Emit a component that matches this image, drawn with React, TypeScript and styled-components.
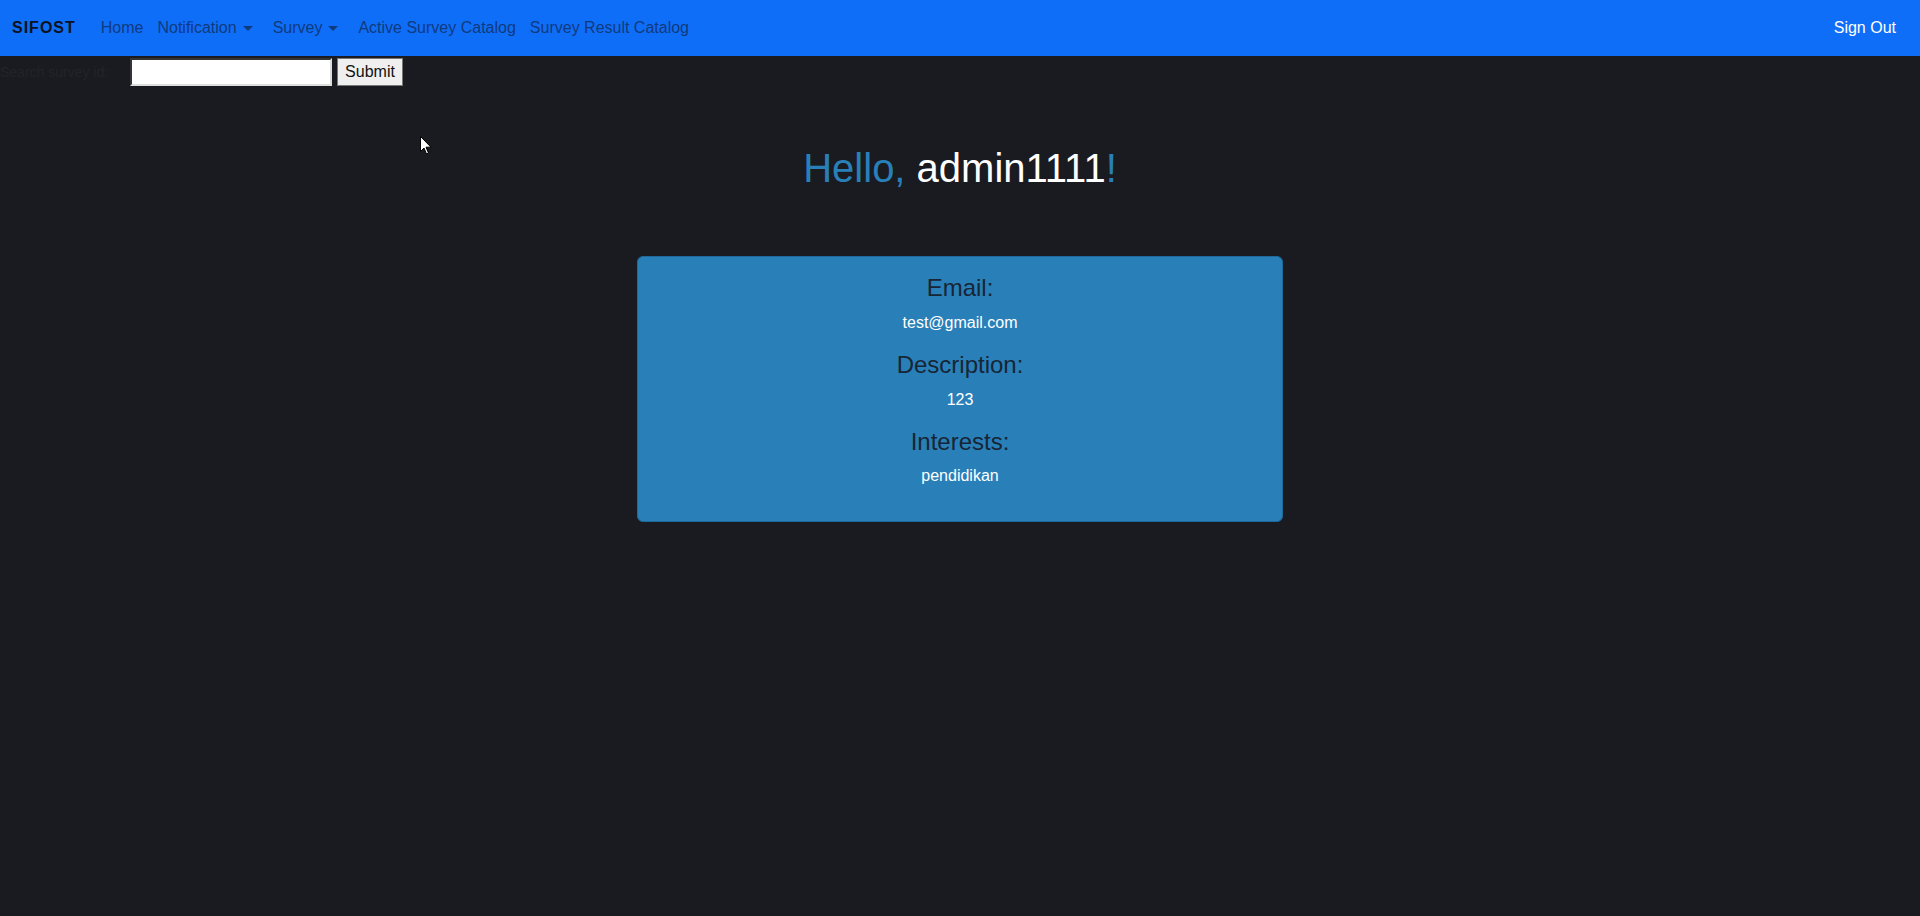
import React from "react";
import styled, { createGlobalStyle } from "styled-components";

const Global = createGlobalStyle`
  html, body {
    margin: 0;
    padding: 0;
    background: #1a1b21;
    font-family: "Liberation Sans", Arial, sans-serif;
    font-size: 16px;
    color: #fff;
  }
  * { box-sizing: border-box; }
`;

const Page = styled.div`
  position: relative;
  min-height: 916px;
  background: #1a1b21;
`;

const Navbar = styled.nav`
  height: 56px;
  background: #0f6ef8;
  display: flex;
  align-items: center;
  padding: 0 17px 0 12px;
`;

const Brand = styled.a`
  font-weight: 700;
  font-size: 16px;
  letter-spacing: 1px;
  color: #0b1222;
  margin-right: 18px;
  text-decoration: none;
`;

const NavList = styled.div`
  display: flex;
  align-items: center;
  flex: 1;
`;

const NavLink = styled.a<{ $light?: boolean }>`
  display: flex;
  align-items: center;
  padding: 0 7px;
  font-size: 16px;
  color: ${(p) => (p.$light ? "#ffffff" : "#0f3a7e")};
  text-decoration: none;
  white-space: nowrap;
`;

const Caret = styled.span`
  display: inline-block;
  margin-left: 6px;
  margin-right: 6px;
  border-top: 5px solid #0f3a7e;
  border-left: 5px solid transparent;
  border-right: 5px solid transparent;
`;

const FormRow = styled.form`
  display: flex;
  align-items: center;
  height: 30px;
  margin-top: 1px;
`;

const Label = styled.label`
  width: 130px;
  font-size: 14px;
  color: #22232a;
  white-space: nowrap;
  overflow: hidden;
`;

const Input = styled.input`
  width: 202px;
  height: 28px;
  border: 2px inset #767676;
  border-color: #888 #ddd #ddd #888;
  background: #fff;
  margin: 0 5px 0 0;
  padding: 0 4px;
`;

const Button = styled.button`
  height: 28px;
  width: 66px;
  padding: 0;
  background: #efefef;
  border: 1px solid #767676;
  font-family: "Liberation Sans", Arial, sans-serif;
  font-size: 16px;
  color: #111;
`;

const Greeting = styled.h1`
  margin: 57px 0 0;
  text-align: center;
  font-weight: 400;
  font-size: 40px;
  line-height: 1.2;
  color: #2980b9;
`;

const Name = styled.span`
  color: #ffffff;
`;

const Card = styled.div`
  width: 646px;
  margin: 64px auto 0;
  background: #2980b9;
  border: 1px solid #1f6a9c;
  border-radius: 6px;
  padding: 17px 16px 17px;
  text-align: center;
`;

const FieldTitle = styled.h4`
  margin: 0 0 8px;
  font-size: 24px;
  font-weight: 400;
  line-height: 1.2;
  color: #172535;
`;

const FieldValue = styled.p`
  margin: 0 0 16px;
  font-size: 16px;
  line-height: 24px;
  color: #ffffff;
`;

const CursorLayer = styled.div`
  position: absolute;
  left: 420px;
  top: 136px;
  pointer-events: none;
`;

const fields = [
  { title: "Email:", value: "test@gmail.com" },
  { title: "Description:", value: "123" },
  { title: "Interests:", value: "pendidikan" },
];

export default function App() {
  return (
    <Page>
      <Global />
      <Navbar>
        <Brand href="#">SIFOST</Brand>
        <NavList>
          <NavLink href="#">Home</NavLink>
          <NavLink href="#">
            Notification
            <Caret />
          </NavLink>
          <NavLink href="#">
            Survey
            <Caret />
          </NavLink>
          <NavLink href="#">Active Survey Catalog</NavLink>
          <NavLink href="#">Survey Result Catalog</NavLink>
        </NavList>
        <NavLink href="#" $light>
          Sign Out
        </NavLink>
      </Navbar>
      <FormRow onSubmit={(e) => e.preventDefault()}>
        <Label>Search survey id:</Label>
        <Input type="text" />
        <Button type="submit">Submit</Button>
      </FormRow>
      <Greeting>
        Hello, <Name>admin1111</Name>!
      </Greeting>
      <Card>
        {fields.map((f) => (
          <React.Fragment key={f.title}>
            <FieldTitle>{f.title}</FieldTitle>
            <FieldValue>{f.value}</FieldValue>
          </React.Fragment>
        ))}
      </Card>
      <CursorLayer>
        <svg width="12" height="19" viewBox="0 0 12 19">
          <path
            d="M0.5 0.5 L0.5 15.5 L4 12 L6.5 18 L8.5 17 L6 11.2 L11 11.2 Z"
            fill="#fff"
            stroke="#000"
            strokeWidth="1"
          />
        </svg>
      </CursorLayer>
    </Page>
  );
}
